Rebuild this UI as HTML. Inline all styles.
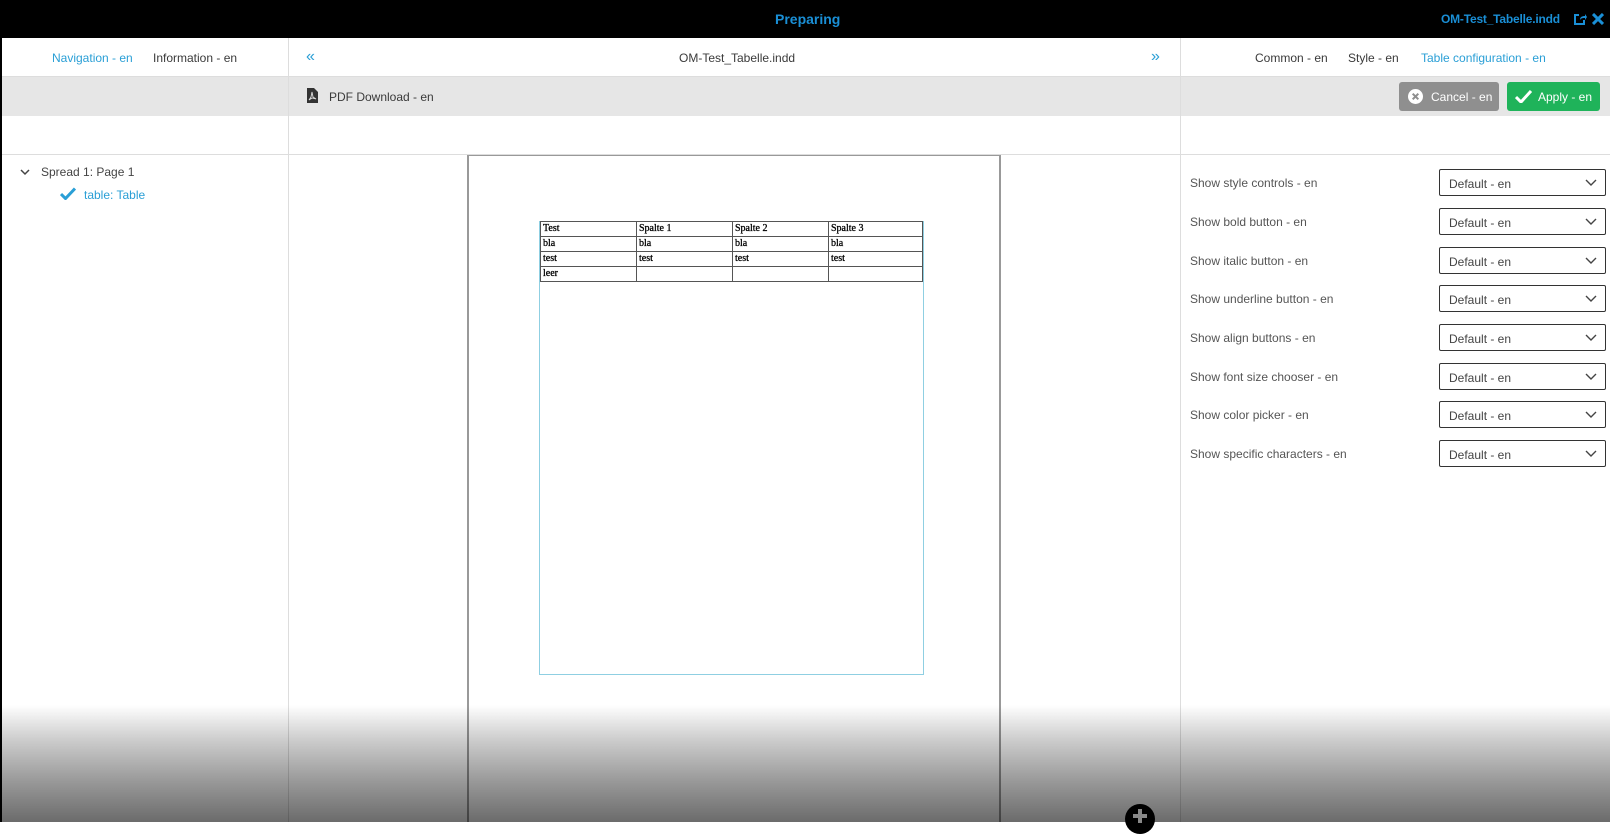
<!DOCTYPE html>
<html><head><meta charset="utf-8"><style>
*{margin:0;padding:0;box-sizing:border-box}
body{width:1610px;height:822px;overflow:hidden;position:relative;background:#fff;font-family:"Liberation Sans",Arial,sans-serif;font-size:12px;color:#3a3a3a}
.a{position:absolute}
.blue{color:#2a9fd6}
.top{left:0;top:0;width:1610px;height:38px;background:#000}
.lbl{white-space:nowrap}
.sel{position:absolute;left:1439px;width:167px;height:27px;border:1px solid #333;border-radius:2px;background:#fff;padding:7px 0 0 9px;color:#444}
.sel svg{position:absolute;right:8px;top:9px}
.lab{position:absolute;left:1190px;color:#555}
table{border-collapse:collapse;font-family:"Liberation Serif",serif;font-size:10px;color:#000;font-weight:bold}
td{border:1px solid #555;height:15px;padding:0 2px;line-height:14px;vertical-align:top;font-weight:normal;-webkit-text-stroke:0.3px #000}
</style></head><body>
<div class="a top"></div>
<div class="a" style="left:775px;top:11px;font-weight:bold;font-size:14px;color:#1a8fd6">Preparing</div>
<div class="a" style="left:1441px;top:12px;font-weight:bold;font-size:12px;color:#1a8fd6;letter-spacing:-0.2px">OM-Test_Tabelle.indd</div>
<svg class="a" style="left:1573px;top:12px" width="14" height="14" viewBox="0 0 14 14"><path d="M6 3H2v9h9V8" fill="none" stroke="#1a8fd6" stroke-width="2"/><path d="M7 8C7 5 9 4 12 4V2l2 3-2 3V6C10 6 8 6 7 8z" fill="#1a8fd6"/></svg>
<svg class="a" style="left:1592px;top:13px" width="12" height="12" viewBox="0 0 12 12"><path d="M1 1L11 11M11 1L1 11" stroke="#1a8fd6" stroke-width="3"/></svg>
<div class="a" style="left:0;top:38px;width:2px;height:784px;background:#000"></div>
<div class="a" style="left:2px;top:38px;width:1608px;height:39px;border-bottom:1px solid #ddd"></div>
<div class="a lbl blue" style="left:52px;top:51px">Navigation - en</div>
<div class="a lbl" style="left:153px;top:51px">Information - en</div>
<div class="a blue" style="left:306px;top:48px;font-size:16px">«</div>
<div class="a lbl" style="left:679px;top:51px">OM-Test_Tabelle.indd</div>
<div class="a blue" style="left:1151px;top:48px;font-size:16px">»</div>
<div class="a lbl" style="left:1255px;top:51px">Common - en</div>
<div class="a lbl" style="left:1348px;top:51px">Style - en</div>
<div class="a lbl blue" style="left:1421px;top:51px">Table configuration - en</div>
<div class="a" style="left:2px;top:77px;width:1608px;height:39px;background:#e6e6e6"></div>
<svg class="a" style="left:307px;top:88px" width="11" height="15" viewBox="0 0 11 15"><path d="M0 0h7l4 4v11H0z" fill="#333"/><path d="M2 12l2-3 1-5 1 5 3 2-4-1z" fill="none" stroke="#ddd" stroke-width="0.9"/></svg>
<div class="a lbl" style="left:329px;top:90px">PDF Download - en</div>
<div class="a" style="left:1399px;top:82px;width:100px;height:29px;background:#8f8f8f;border-radius:3px;color:#fff"><svg class="a" style="left:9px;top:7px" width="15" height="15" viewBox="0 0 16 16"><circle cx="8" cy="8" r="8" fill="#fff"/><path d="M5 5l6 6M11 5l-6 6" stroke="#8f8f8f" stroke-width="2.2"/></svg><span class="a" style="left:32px;top:8px">Cancel - en</span></div>
<div class="a" style="left:1507px;top:82px;width:93px;height:29px;background:#1fb35a;border-radius:3px;color:#fff"><svg class="a" style="left:8px;top:8px" width="17" height="13" viewBox="0 0 17 13"><path d="M1 7l5 5L16 1" fill="none" stroke="#fff" stroke-width="3"/></svg><span class="a" style="left:31px;top:8px">Apply - en</span></div>
<div class="a" style="left:2px;top:154px;width:1608px;height:1px;background:#ddd"></div>
<div class="a" style="left:288px;top:38px;width:1px;height:784px;background:#ddd"></div>
<div class="a" style="left:1180px;top:38px;width:1px;height:784px;background:#ddd"></div>
<svg class="a" style="left:20px;top:169px" width="10" height="7" viewBox="0 0 10 7"><path d="M1 1l4 4 4-4" fill="none" stroke="#444" stroke-width="1.5"/></svg>
<div class="a lbl" style="left:41px;top:165px;color:#444">Spread 1: Page 1</div>
<svg class="a" style="left:60px;top:187px" width="16" height="13" viewBox="0 0 16 13"><path d="M1 7l4.5 4.5L15 1.5" fill="none" stroke="#2a9fd6" stroke-width="3"/></svg>
<div class="a lbl blue" style="left:84px;top:188px">table: Table</div>
<div class="a" style="left:467px;top:155px;width:534px;height:667px;border-left:2px solid #999;border-right:2px solid #999;border-top:1px solid #999;background:#fff"></div>
<div class="a" style="left:539px;top:221px;width:385px;height:454px;border:1px solid #8fcfe2"></div>
<table class="a" style="left:540px;top:221px;width:383px">
<tr><td style="width:96px">Test</td><td style="width:96px">Spalte 1</td><td style="width:96px">Spalte 2</td><td>Spalte 3</td></tr>
<tr><td>bla</td><td>bla</td><td>bla</td><td>bla</td></tr>
<tr><td>test</td><td>test</td><td>test</td><td>test</td></tr>
<tr><td>leer</td><td></td><td></td><td></td></tr>
</table>
<div class="lab" style="top:176px">Show style controls - en</div>
<div class="lab" style="top:215px">Show bold button - en</div>
<div class="lab" style="top:254px">Show italic button - en</div>
<div class="lab" style="top:292px">Show underline button - en</div>
<div class="lab" style="top:331px">Show align buttons - en</div>
<div class="lab" style="top:370px">Show font size chooser - en</div>
<div class="lab" style="top:408px">Show color picker - en</div>
<div class="lab" style="top:447px">Show specific characters - en</div>
<div class="sel" style="top:169px">Default - en<svg width="12" height="8" viewBox="0 0 12 8"><path d="M1 1l5 5 5-5" fill="none" stroke="#444" stroke-width="1.4"/></svg></div>
<div class="sel" style="top:208px">Default - en<svg width="12" height="8" viewBox="0 0 12 8"><path d="M1 1l5 5 5-5" fill="none" stroke="#444" stroke-width="1.4"/></svg></div>
<div class="sel" style="top:247px">Default - en<svg width="12" height="8" viewBox="0 0 12 8"><path d="M1 1l5 5 5-5" fill="none" stroke="#444" stroke-width="1.4"/></svg></div>
<div class="sel" style="top:285px">Default - en<svg width="12" height="8" viewBox="0 0 12 8"><path d="M1 1l5 5 5-5" fill="none" stroke="#444" stroke-width="1.4"/></svg></div>
<div class="sel" style="top:324px">Default - en<svg width="12" height="8" viewBox="0 0 12 8"><path d="M1 1l5 5 5-5" fill="none" stroke="#444" stroke-width="1.4"/></svg></div>
<div class="sel" style="top:363px">Default - en<svg width="12" height="8" viewBox="0 0 12 8"><path d="M1 1l5 5 5-5" fill="none" stroke="#444" stroke-width="1.4"/></svg></div>
<div class="sel" style="top:401px">Default - en<svg width="12" height="8" viewBox="0 0 12 8"><path d="M1 1l5 5 5-5" fill="none" stroke="#444" stroke-width="1.4"/></svg></div>
<div class="sel" style="top:440px">Default - en<svg width="12" height="8" viewBox="0 0 12 8"><path d="M1 1l5 5 5-5" fill="none" stroke="#444" stroke-width="1.4"/></svg></div>
<div class="a" style="left:2px;top:705px;width:1608px;height:117px;background:linear-gradient(to bottom,rgba(0,0,0,0),rgba(0,0,0,0.2) 30%,rgba(0,0,0,0.4) 65%,rgba(0,0,0,0.58))"></div>
<div class="a" style="left:1125px;top:804px;width:30px;height:30px;border-radius:50%;background:#000"></div>
<div class="a" style="left:1138px;top:809px;width:4px;height:14px;background:#888"></div>
<div class="a" style="left:1133px;top:814px;width:14px;height:4px;background:#888"></div>
</body></html>
